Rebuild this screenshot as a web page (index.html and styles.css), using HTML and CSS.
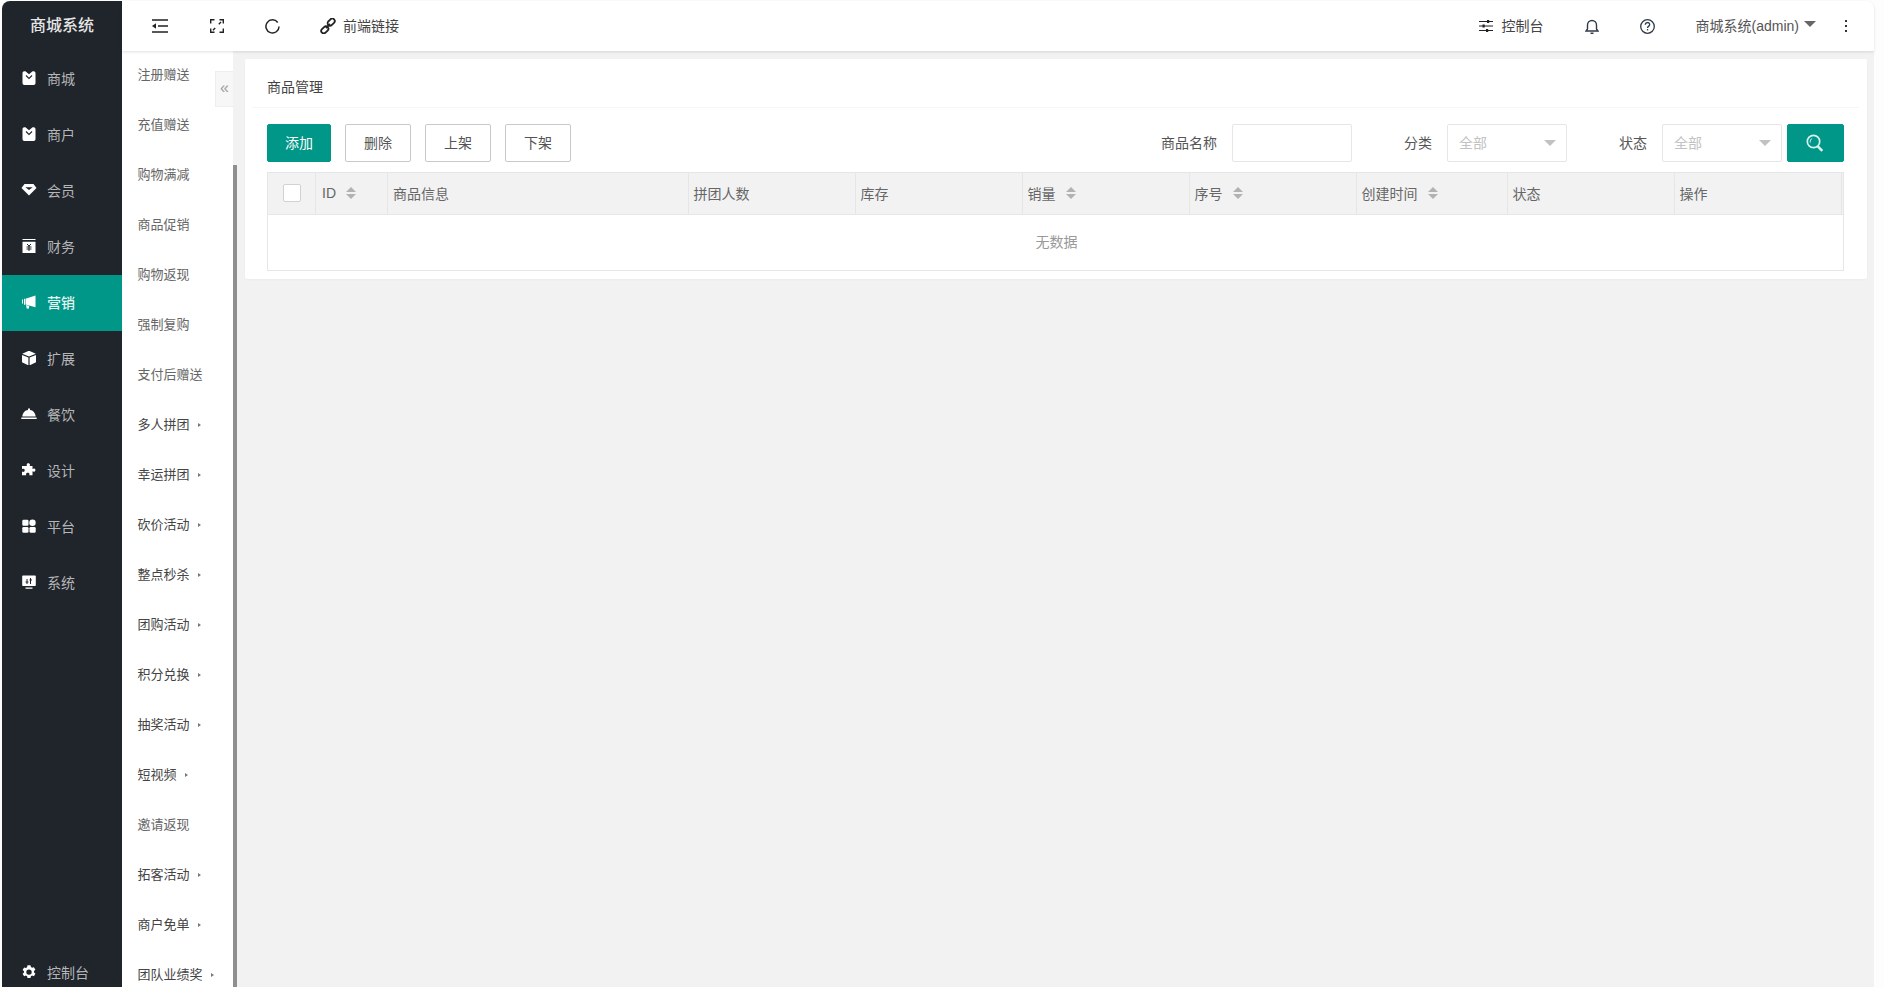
FILE: index.html
```html
<!DOCTYPE html>
<html lang="zh">
<head>
<meta charset="utf-8">
<title>商品管理</title>
<link rel="stylesheet" href="styles.css">
</head>
<body>
<div class="app">
  <aside class="side">
    <div class="logo">商城系统</div>
    <nav class="nav">
      <a class="nav-item"><svg class="nav-ico" viewBox="0 0 14 14"><path fill="#fff" d="M.5 2.200C.5 1 1.200.2 2.400.2h1L7 3.200 10.600.2h1c1.200 0 1.900.8 1.900 2v9.800c0 1.200-.7 1.900-1.900 1.900H2.400C1.200 13.900.5 13.200.5 12z"/><path fill="none" stroke="#20242b" stroke-width="1.100" d="M4 4.500l3 3 3-3"/></svg><span>商城</span></a>
      <a class="nav-item"><svg class="nav-ico" viewBox="0 0 14 14"><path fill="#fff" d="M.5 2.200C.5 1 1.200.2 2.400.2h1L7 3.200 10.600.2h1c1.200 0 1.900.8 1.900 2v9.800c0 1.200-.7 1.900-1.900 1.900H2.400C1.200 13.900.5 13.200.5 12z"/><path fill="none" stroke="#20242b" stroke-width="1.100" d="M4 4.500l3 3 3-3"/></svg><span>商户</span></a>
      <a class="nav-item"><svg class="nav-ico" viewBox="0 0 14 14"><path fill="#fff" d="M2.500 1h9L14.500 5 7 12.500-.5 5z"/><path fill="#20242b" d="M3.300 4.300h7.400L7 7z"/></svg><span>会员</span></a>
      <a class="nav-item"><svg class="nav-ico" viewBox="0 0 14 14"><path fill="#fff" d="M.5 0h13v1h-13zM.5 2.800h13v11.200H.5z"/><path fill="none" stroke="#20242b" stroke-width="1" d="M5 5l2 2 2-2M7 7v5M4.500 8h5M4.500 10h5"/></svg><span>财务</span></a>
      <a class="nav-item active"><svg class="nav-ico" viewBox="0 0 14 14"><path fill="#fff" d="M3.500 3.800L13.500.5v11.800L3.500 9.500zM4 10l3.200 1-.5 2.800-2-.3zM0 4.500h1v4H0zM2 3.800h1v6H2z"/></svg><span>营销</span></a>
      <a class="nav-item"><svg class="nav-ico" viewBox="0 0 14 14"><path fill="#fff" d="M7-.3l6.800 3L7 5.500.2 2.700zM0 3.900l6.400 2.700v7.800L0 11.200zM14 3.900L7.600 6.600v7.800l6.400-3.200z"/></svg><span>扩展</span></a>
      <a class="nav-item"><svg class="nav-ico" viewBox="0 0 16 14"><path fill="#fff" d="M7 1.500h2V3c3.100.3 5.300 2.800 5.700 6.500H1.300C1.700 5.800 3.900 3.300 7 3zM.3 10.500h15.400V12H.3z"/></svg><span>餐饮</span></a>
      <a class="nav-item"><svg class="nav-ico" viewBox="0 0 14 14"><path fill="#fff" d="M5.200.6c.9-.9 2.800-.4 2.800 1.100 0 .5-.2.900-.3 1.300h2.800v2.900c.7-.3 1.100-.6 1.700-.4 1.600.3 1.600 2.900 0 3.200-.6.200-1-.1-1.700-.4v3.900H7.200c.3-.8.400-1.500-.2-2.100-.9-.8-3-.4-3 1.100 0 .4.100.7.300 1H0V8.600c.6.300 1.300.5 1.900.2 1.300-.6 1-2.800-.4-3-.5-.1-1 .1-1.500.3V3h4.900c-.3-.8-.3-1.700.3-2.400z"/></svg><span>设计</span></a>
      <a class="nav-item"><svg class="nav-ico" viewBox="0 0 14 14"><g fill="#fff"><rect x=".3" y=".8" width="6.200" height="5.900" rx="1.300"/><circle cx="10.500" cy="3.800" r="3.200"/><rect x=".3" y="7.900" width="6.200" height="5.900" rx="1.300"/><rect x="7.500" y="7.900" width="6.200" height="5.900" rx="1.300"/></g></svg><span>平台</span></a>
      <a class="nav-item"><svg class="nav-ico" viewBox="0 0 14 14"><path fill="#fff" d="M1 .5h12c.5 0 .8.300.8.800v9c0 .5-.3.800-.8.800H1c-.5 0-.8-.3-.8-.8v-9C.2.800.5.500 1 .5zM3.500 12.600h7v1.200h-7z"/><path fill="none" stroke="#20242b" d="M5 4v5M3.500 7h3M8.500 3v6M7.500 5h2.500"/></svg><span>系统</span></a>
    </nav>
    <a class="nav-item console"><svg class="nav-ico" viewBox="0 0 14 14"><path fill="#fff" fill-rule="evenodd" d="M5.500-.3h3l.4 1.800 1.200.7 1.800-.6 1.500 2.600-1.400 1.200v1.400l1.400 1.200-1.500 2.600-1.800-.6-1.200.7-.4 1.800h-3l-.4-1.800-1.200-.7-1.800.6L.6 8.200 2 7V5.600L.6 4.400l1.500-2.600 1.800.6 1.200-.7zM7 3.800a2.700 2.700 0 100 5.400 2.700 2.700 0 000-5.400z" transform="translate(0 .6)"/></svg><span>控制台</span></a>
  </aside>

  <div class="right">
    <header class="top">
      <svg class="t-ico menu" viewBox="0 0 16 14"><path fill="none" stroke="#222" stroke-width="1.500" d="M0 1h16M6 7h10M0 13h16"/><path fill="#222" d="M4 4.200v5.600L0 7z"/></svg>
      <svg class="t-ico full" viewBox="0 0 14 14"><path fill="none" stroke="#222" stroke-width="1.400" d="M.7 4.500V.7H4.500M9.500.7h3.800V4.500M.7 9.500v3.800H4.500M9.500 13.300h3.800V9.500M3 11.200l2.200-2.200M11 3L8.800 5.200"/></svg>
      <svg class="t-ico refresh" viewBox="0 0 16 16"><path fill="none" stroke="#222" stroke-width="1.600" d="M13.600 3.700A7 7 0 1 0 15 8"/></svg>
      <a class="t-link"><svg class="link-ico" viewBox="0 0 16 16"><g fill="none" stroke="#222" stroke-width="1.800"><rect x="7.200" y="1.600" width="8" height="5" rx="2.500" transform="rotate(-45 11.200 4.100)"/><rect x=".8" y="9.400" width="8" height="5" rx="2.500" transform="rotate(-45 4.800 11.900)"/><path d="M6 10l4-4"/></g></svg>前端链接</a>
      <div class="top-right">
        <a class="t-link console-link"><svg class="slider-ico" viewBox="0 0 14 12"><path fill="none" stroke="#222" d="M0 1.500h14M0 6h14M0 10.500h14"/><path fill="#222" d="M8 0h2.200v3H8zM3.500 4.500h2.200v3H3.500zM7 9h2.200v3H7z"/></svg>控制台</a>
        <svg class="t-ico bell" viewBox="0 0 14 15"><path fill="none" stroke="#2f3a4a" stroke-width="1.400" d="M1 12h12l-1.500-2V6A4.500 4.500 0 0 0 2.500 6v4zM5.500 14.200h3"/></svg>
        <svg class="t-ico help" viewBox="0 0 15 15"><circle cx="7.500" cy="7.500" r="6.800" fill="none" stroke="#2f3a4a" stroke-width="1.300"/><path fill="none" stroke="#2f3a4a" stroke-width="1.300" d="M5.300 5.800c0-3 4.400-3 4.400-.2 0 1.800-2.200 1.700-2.200 3.400"/><path fill="#2f3a4a" d="M6.900 10h1.300v1.400H6.900z"/></svg>
        <span class="user">商城系统(admin)<i class="caret"></i></span>
        <span class="kebab"><i></i><i></i><i></i></span>
      </div>
    </header>

    <div class="body">
      <div class="sub">
        <a class="s-item">注册赠送</a>
        <a class="s-item">充值赠送</a>
        <a class="s-item">购物满减</a>
        <a class="s-item">商品促销</a>
        <a class="s-item">购物返现</a>
        <a class="s-item">强制复购</a>
        <a class="s-item">支付后赠送</a>
        <a class="s-item more">多人拼团</a>
        <a class="s-item more">幸运拼团</a>
        <a class="s-item more">砍价活动</a>
        <a class="s-item more">整点秒杀</a>
        <a class="s-item more">团购活动</a>
        <a class="s-item more">积分兑换</a>
        <a class="s-item more">抽奖活动</a>
        <a class="s-item more">短视频</a>
        <a class="s-item">邀请返现</a>
        <a class="s-item more">拓客活动</a>
        <a class="s-item more">商户免单</a>
        <a class="s-item more">团队业绩奖</a>
      </div>
      <div class="collapse">«</div>
      <div class="track"><div class="thumb"></div></div>
      <main class="main">
        <section class="card">
          <h1 class="card-title">商品管理</h1>
          <div class="card-body">
            <div class="toolbar">
              <button class="btn primary">添加</button>
              <button class="btn">删除</button>
              <button class="btn">上架</button>
              <button class="btn">下架</button>
              <div class="filters">
                <label class="lbl">商品名称</label><div class="field"></div>
                <label class="lbl l-cat">分类</label><div class="field select">全部<i class="tri"></i></div>
                <label class="lbl l-cat">状态</label><div class="field select">全部<i class="tri"></i></div>
                <button class="btn primary search"><svg viewBox="0 0 18 18" class="search-ico"><circle cx="7.500" cy="7.500" r="6.200" fill="none" stroke="#d8f2ee" stroke-width="1.700"/><path d="M4.300 8.500c-.4-1.800.4-3.400 1.800-4" fill="none" stroke="#d8f2ee"/><path d="M11.800 12.300l4.500 4.500" stroke="#d8f2ee" stroke-width="2.600"/></svg></button>
              </div>
            </div>
            <div class="table">
              <div class="thead">
                <div class="th c-check"><span class="check"></span></div>
                <div class="th c-id">ID<i class="sort"></i></div>
                <div class="th c-info">商品信息</div>
                <div class="th c-std">拼团人数</div>
                <div class="th c-std">库存</div>
                <div class="th c-std">销量<i class="sort"></i></div>
                <div class="th c-std">序号<i class="sort"></i></div>
                <div class="th c-time">创建时间<i class="sort"></i></div>
                <div class="th c-std">状态</div>
                <div class="th c-std">操作</div>
              </div>
              <div class="empty">无数据</div>
            </div>
          </div>
        </section>
      </main>
    </div>
  </div>
</div>
</body>
</html>
```

FILE: styles.css
```css
* { box-sizing: border-box; }
html, body { margin: 0; height: 100%; }
body {
  background: #fdfdfd;
  font-family: "Liberation Sans", "Noto Sans CJK SC", sans-serif;
  font-size: 14px;
  color: #666;
  overflow: hidden;
}
.app {
  display: flex;
  height: 987px;
  padding: 1px 10px 0 2px;
}
i { display: block; font-style: normal; }

/* sidebar */
.side {
  width: 120px;
  flex: none;
  display: flex;
  flex-direction: column;
  background: #20242b;
  border-top-left-radius: 8px;
}
.logo {
  height: 50px;
  padding-bottom: 5px;
  display: flex;
  align-items: center;
  justify-content: center;
  color: #e6e6e6;
  font-size: 16px;
  font-weight: 500;
}
.nav { flex: 1; }
.nav-item {
  display: flex;
  align-items: center;
  height: 56px;
  padding: 0 0 2px 19px;
  color: #b4b6b8;
  font-size: 14px;
}
.nav-ico { width: 16px; height: 14px; flex: none; margin-right: 10px; }
.nav-item.active { background: #009688; color: #e4f4f2; font-weight: 500; }
.nav-item.console { height: 30px; margin-bottom: 0; padding-bottom: 0; }

/* right side */
.right { flex: 1; min-width: 0; display: flex; flex-direction: column; }
.top {
  height: 50px;
  flex: none;
  display: flex;
  align-items: center;
  background: #fff;
  border-top-right-radius: 8px;
  box-shadow: 0 1px 3px rgba(0, 0, 0, .12);
  position: relative;
  z-index: 2;
  color: #444;
  font-size: 14px;
}
.t-ico { display: block; flex: none; }
.menu { width: 16px; height: 14px; margin-left: 30px; }
.full { width: 14px; height: 14px; margin-left: 42px; }
.refresh { width: 15px; height: 15px; margin-left: 41px; }
.t-link { display: flex; align-items: center; padding-bottom: 2px; }
.t-link { margin-left: 40px; }
.link-ico { width: 16px; height: 16px; margin: 2px 7px 0 0; }
.top-right { margin-left: auto; display: flex; align-items: center; padding-right: 27px; }
.console-link { margin-left: 0; }
.slider-ico { width: 14px; height: 12px; margin: 2px 9px 0 0; }
.bell { width: 14px; height: 15px; margin-left: 41px; }
.help { width: 15px; height: 15px; margin-left: 41px; }
.user { display: flex; align-items: center; margin-left: 41px; padding-bottom: 2px; color: #555; }
.caret {
  width: 0; height: 0; margin-left: 5px; margin-top: -2px;
  border: 6px solid transparent;
  border-bottom: 0;
  border-top-color: #666;
}
.kebab { display: flex; flex-direction: column; gap: 3px; margin-left: 29px; }
.kebab i { width: 2px; height: 2px; background: #333; }

/* body */
.body { flex: 1; min-height: 0; display: flex; position: relative; }
.sub {
  width: 111px;
  flex: none;
  background: #fff;
  overflow: hidden;
}
.s-item {
  display: flex;
  align-items: center;
  height: 50px;
  padding: 0 0 6px 15.500px;
  color: #666;
  font-size: 13px;
  white-space: nowrap;
}
.s-item.more { color: #444; }
.s-item.more::after {
  content: "";
  margin: 3px 0 0 8px;
  border-left: 3px solid #777;
  border-top: 2px solid transparent;
  border-bottom: 2px solid transparent;
}
.collapse {
  position: absolute;
  left: 93px;
  top: 20px;
  width: 18px;
  height: 36px;
  background: #f7f7f7;
  border: 1px solid #eee;
  border-right: 0;
  color: #a0a0a0;
  font-size: 16px;
  text-align: center;
  line-height: 32px;
}
.track { width: 4px; flex: none; background: #f2f2f2; padding-top: 114px; }
.thumb { height: 100%; background: #8f8f8f; }
.main { flex: 1; min-width: 0; background: #f2f2f2; padding: 8px 7px 0 8px; }

/* card */
.card {
  background: #fff;
  border-radius: 2px;
  height: 220px;
  box-shadow: 0 1px 2px rgba(0, 0, 0, .03);
}
.card-title {
  margin: 0 8px 0 7px;
  padding-left: 15px;
  height: 49px;
  line-height: 56px;
  border-bottom: 1px solid #f6f6f6;
  font-size: 14px;
  font-weight: 400;
  color: #444;
}
.card-body { padding: 16px 23px 0 22px; }
.toolbar { display: flex; height: 38px; }
.btn {
  height: 38px;
  width: 66px;
  margin-right: 14px;
  padding: 0 0 2px;
  background: #fff;
  border: 1px solid #c9c9c9;
  border-radius: 2px;
  color: #555;
  font: inherit;
}
.btn.primary { width: 64px; background: #009688; border-color: #009688; color: #fff; }
.filters { margin-left: auto; display: flex; align-items: center; }
.lbl { color: #555; margin: 0 15px 2px 0; }
.l-cat { margin-left: 52px; }
.field {
  width: 120px;
  height: 38px;
  background: #fff;
  border: 1px solid #e6e6e6;
  border-radius: 2px;
}
.select {
  display: flex;
  align-items: center;
  justify-content: space-between;
  padding: 0 10px 2px 11px;
  color: #c2c2c2;
}
.tri {
  width: 0; height: 0;
  margin-top: 2px;
  border: 6px solid transparent;
  border-bottom: 0;
  border-top-color: #c2c2c2;
}
.filters .search {
  width: 57px;
  margin: 0 0 0 5px;
  padding: 0 2px 0 0;
  display: flex;
  align-items: center;
  justify-content: center;
}
.search-ico { width: 18px; height: 18px; }

/* table */
.table { margin-top: 10px; height: 99px; border: 1px solid #e6e6e6; background: #fff; }
.thead {
  display: flex;
  height: 42px;
  background: #f2f2f2;
  border-bottom: 1px solid #e6e6e6;
  padding-right: 1px;
}
.th {
  display: flex;
  align-items: center;
  padding: 0 0 1px 5px;
  border-right: 1px solid #e6e6e6;
  color: #666;
  flex: none;
}
.c-check { width: 48px; padding-left: 15px; }
.c-id { width: 72px; padding-left: 6px; }
.c-info { width: 300.500px; }
.c-std { width: 167px; }
.c-time { width: 151px; }
.check {
  width: 18px; height: 18px;
  background: #fff;
  border: 1px solid #d2d2d2;
  border-radius: 2px;
}
.sort {
  position: relative;
  width: 10px;
  height: 12px;
  margin-left: 10px;
}
.sort::before, .sort::after {
  content: "";
  position: absolute;
  left: 0;
  border: 5px solid transparent;
}
.sort::before { top: 0; border-bottom-color: #b2b2b2; border-top: 0; }
.sort::after { bottom: 0; border-top-color: #b2b2b2; border-bottom: 0; }
.empty {
  height: 55px;
  padding: 0 0 3px 2px;
  display: flex;
  align-items: center;
  justify-content: center;
  color: #999;
}
```
